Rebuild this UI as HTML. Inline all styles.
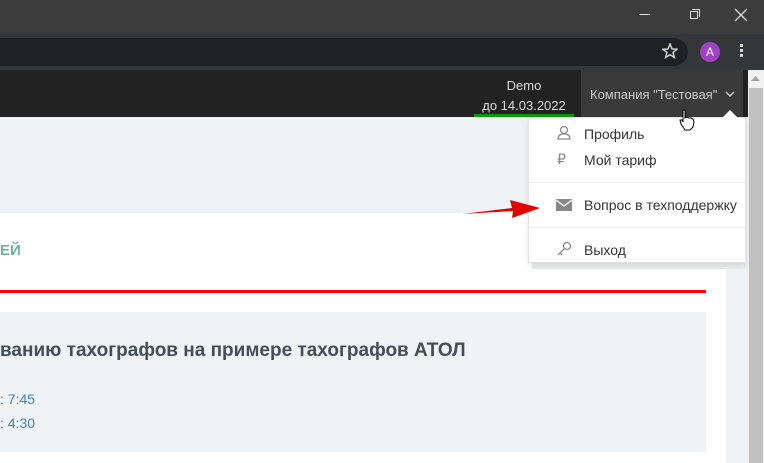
<!DOCTYPE html>
<html><head><meta charset="utf-8"><style>
*{margin:0;padding:0;box-sizing:border-box}
body{width:764px;height:463px;overflow:hidden;position:relative;background:#fff;font-family:"Liberation Sans","DejaVu Sans",sans-serif}
.a{position:absolute}
</style></head><body>
<div class="a" style="left:0;top:0;width:764px;height:34px;background:#3c3c3c"></div>
<div class="a" style="left:639px;top:14px;width:11px;height:1px;background:#ddd"></div>
<div class="a" style="left:690px;top:11px;width:8px;height:8px;border:1px solid #ddd"></div>
<div class="a" style="left:692px;top:9px;width:8px;height:8px;border-top:1px solid #ddd;border-right:1px solid #ddd"></div>
<svg class="a" style="left:734px;top:8px" width="14" height="14"><path d="M1 1L13 13M13 1L1 13" stroke="#ddd" stroke-width="1.3"/></svg>
<div class="a" style="left:0;top:34px;width:764px;height:36px;background:#35363a"></div>
<div class="a" style="left:-20px;top:38px;width:708px;height:28px;background:#202124;border-radius:14px"></div>
<svg class="a" style="left:662px;top:43px" width="16" height="16"><path d="M8 1L10 6L15 6.3L11 9.5L12.4 14.5L8 11.7L3.6 14.5L5 9.5L1 6.3L6 6Z" fill="none" stroke="#ddd" stroke-width="1.4"/></svg>
<div class="a" style="left:700px;top:42px;width:20px;height:20px;border-radius:50%;background:#a142c4;color:#fff;font-size:12px;text-align:center;line-height:20px">A</div>
<div class="a" style="left:740px;top:44px;width:3px;height:3px;background:#ddd;box-shadow:0 5px 0 #ddd,0 10px 0 #ddd"></div>
<div class="a" style="left:0;top:70px;width:748px;height:47px;background:#222"></div>
<div class="a" style="left:474px;top:76px;width:100px;text-align:center;color:#ddd;font-size:13px;line-height:20px">Demo<br>до 14.03.2022</div>
<div class="a" style="left:474px;top:114px;width:100px;height:3px;background:#0a9a0a"></div>
<div class="a" style="left:581px;top:70px;width:162px;height:47px;background:#3a3a3a;color:#ccc;font-size:13px;line-height:50px;padding-left:9px">Компания "Тестовая"</div>
<svg class="a" style="left:725px;top:91px" width="10" height="7"><path d="M1 1L5 5L9 1" stroke="#ccc" stroke-width="1.5" fill="none"/></svg>
<div class="a" style="left:748px;top:70px;width:16px;height:393px;background:#f1f1f1"></div>
<div class="a" style="left:749px;top:88px;width:14px;height:375px;background:#c1c1c1"></div>
<svg class="a" style="left:751px;top:76px" width="9" height="6"><path d="M0 5L4.5 0L9 5Z" fill="#a3a3a3"/></svg>
<div class="a" style="left:0;top:117px;width:748px;height:346px;background:#eef2f5"></div>
<div class="a" style="left:0;top:213px;width:726px;height:250px;background:#fff"></div>
<div class="a" style="left:0;top:242px;color:#6db3a6;font-size:15px;font-weight:bold">ЕЙ</div>
<div class="a" style="left:0;top:290px;width:706px;height:3px;background:#f00"></div>
<div class="a" style="left:0;top:312px;width:706px;height:140px;background:#eff3f6"></div>
<div class="a" style="left:0;top:340px;color:#444d56;font-size:19px;font-weight:bold">ванию тахографов на примере тахографов АТОЛ</div>
<div class="a" style="left:0;top:387px;color:#3f85c4;font-size:14px;line-height:24px">: 7:45<br>: 4:30</div>
<div class="a" style="left:532px;top:117px;width:214px;height:152px;background:#e8ebee"></div>
<div class="a" style="left:528px;top:117px;width:218px;height:146px;background:#fff;border:1px solid #e3e3e3;box-shadow:0 2px 6px rgba(0,0,0,.1)"></div>
<svg class="a" style="left:722px;top:110px" width="16" height="8"><path d="M0 8L8 0L16 8Z" fill="#fff"/></svg>
<div class="a" style="left:529px;top:182px;width:216px;height:1px;background:#eee"></div>
<div class="a" style="left:529px;top:227px;width:216px;height:1px;background:#eee"></div>
<div class="a" style="left:584px;top:121px;color:#333;font-size:14px;line-height:26px">Профиль<br>Мой тариф</div>
<div class="a" style="left:584px;top:197px;color:#333;font-size:14px">Вопрос в техподдержку</div>
<div class="a" style="left:584px;top:242px;color:#333;font-size:14px">Выход</div>
<svg class="a" style="left:556px;top:125px" width="16" height="16"><circle cx="8" cy="5" r="3.5" fill="none" stroke="#888" stroke-width="1.3"/><path d="M2 14Q2 9 8 9Q14 9 14 14Z" fill="none" stroke="#888" stroke-width="1.3"/></svg>
<div class="a" style="left:557px;top:151px;color:#888;font-size:14px">₽</div>
<svg class="a" style="left:556px;top:199px" width="16" height="12"><rect x="0" y="0" width="16" height="12" fill="#888"/><path d="M0 1L8 7L16 1" stroke="#fff" stroke-width="1.2" fill="none"/></svg>
<svg class="a" style="left:556px;top:241px" width="16" height="16"><circle cx="11" cy="5" r="3.5" fill="none" stroke="#888" stroke-width="1.3"/><path d="M8.5 7.5L2 14M4 12L6 14" stroke="#888" stroke-width="1.3"/></svg>
<svg class="a" style="left:462px;top:196px" width="80" height="24"><path d="M0 18L50 12L48 4L78 12L50 22L51 15Z" fill="#e30000"/></svg>
<svg class="a" style="left:678px;top:108px" width="18" height="24"><path d="M5 2L7 2L7 10L9 9L11 10L13 10L15 11L16 14L15 19L12 22L7 22L3 16L2 12L4 12L5 14Z" fill="#fff" stroke="#000" stroke-width="1"/></svg>
</body></html>
